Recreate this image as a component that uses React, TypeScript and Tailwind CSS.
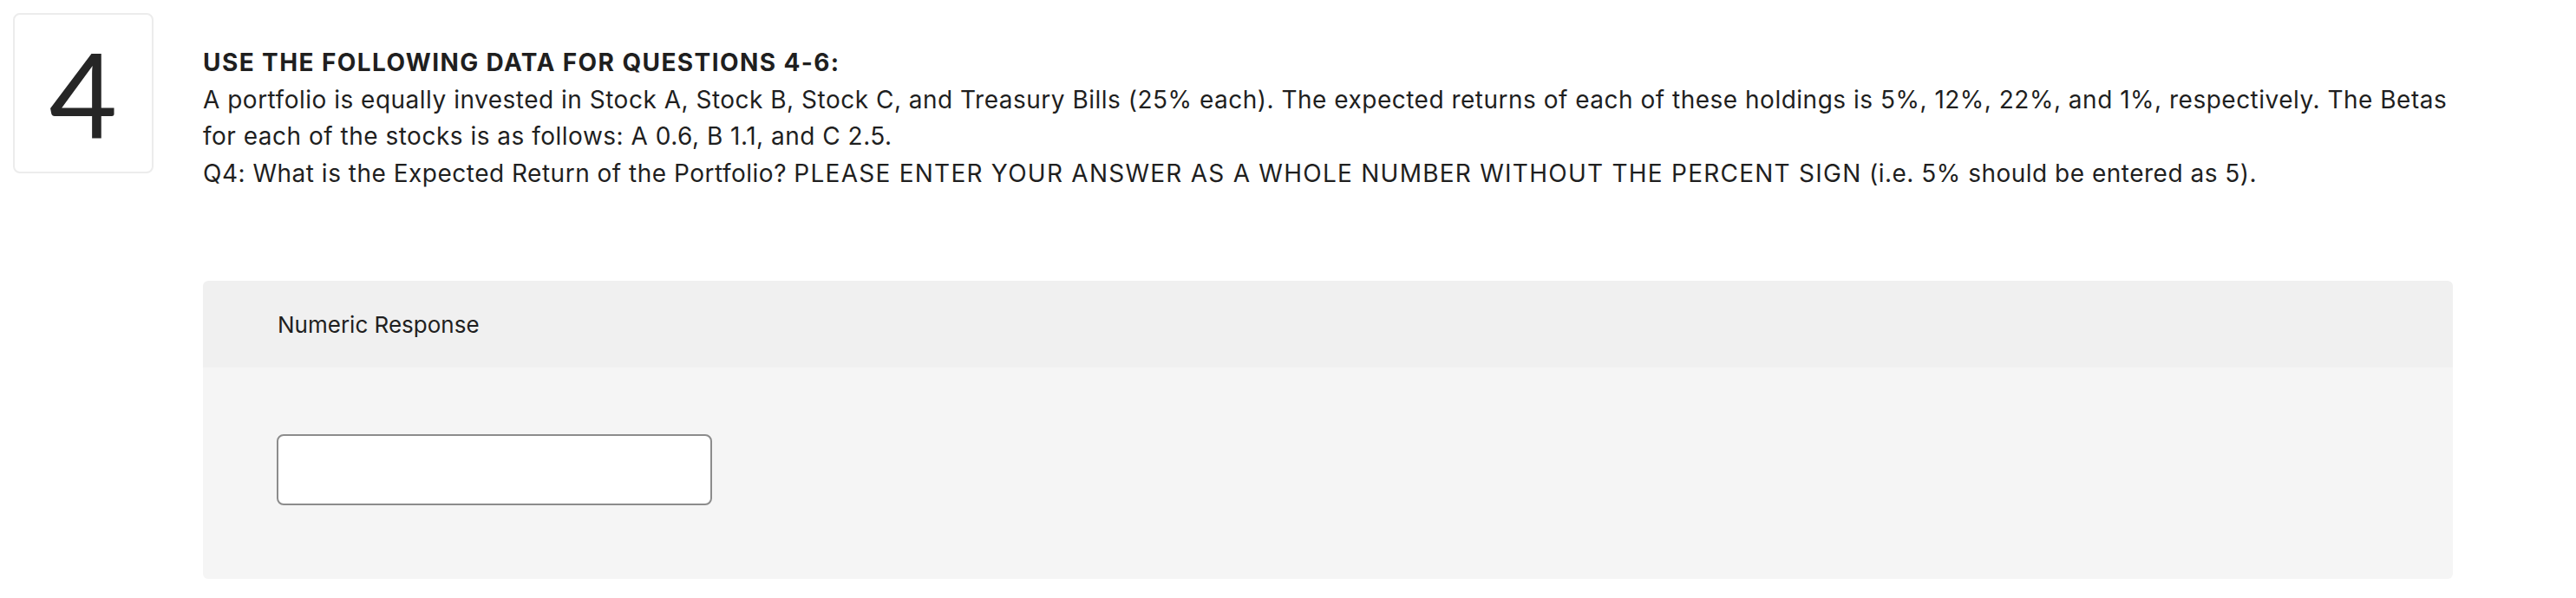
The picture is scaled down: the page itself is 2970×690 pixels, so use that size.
import React from 'react';

const font = { fontFamily: 'Inter, Lato, "Open Sans", sans-serif' };

export default function App() {
  return (
    <div className="flex items-start bg-white pl-[15px] text-[#1f1f1f]" style={font}>
      {/* question number */}
      <div className="mt-[15px] flex h-[185px] w-[162px] shrink-0 items-center justify-center rounded-[8px] border-2 border-[#ececec] bg-white">
        <span className="font-['Lato'] text-[136px] leading-none font-normal text-[#262626]">4</span>
      </div>

      <div className="ml-[57px] w-[2594px] shrink-0 pt-[51px]">
        <div className="text-[28px] leading-[42.5px] tracking-[0.5px] whitespace-nowrap">
          <div className="font-bold tracking-[1.4px]">USE THE FOLLOWING DATA FOR QUESTIONS 4-6:</div>
          <div>
            A portfolio is equally invested in Stock A, Stock B, Stock C, and Treasury Bills (25% each). The expected
            returns of each of these holdings is 5%, 12%, 22%, and 1%, respectively. The Betas
          </div>
          <div>for each of the stocks is as follows: A 0.6, B 1.1, and C 2.5.</div>
          <div>
            Q4: What is the Expected Return of the Portfolio?{' '}
            <span className="tracking-[1.25px]">
              PLEASE ENTER YOUR ANSWER AS A WHOLE NUMBER WITHOUT THE PERCENT SIGN
            </span>{' '}
            (i.e. 5% should be entered as 5).
          </div>
        </div>

        <div className="mt-[103px] overflow-hidden rounded-[6px]">
          <div className="flex h-[100px] items-center bg-[#f0f0f0] pl-[86px]">
            <span className="text-[26px]">Numeric Response</span>
          </div>
          <div className="bg-[#f5f5f5] pt-[77px] pb-[85px] pl-[85px]">
            <input
              type="text"
              aria-label="Numeric Response"
              className="block h-[82px] w-[502px] rounded-[8px] border-2 border-[#8c8c8c] bg-white outline-none"
            />
          </div>
        </div>
      </div>
    </div>
  );
}
